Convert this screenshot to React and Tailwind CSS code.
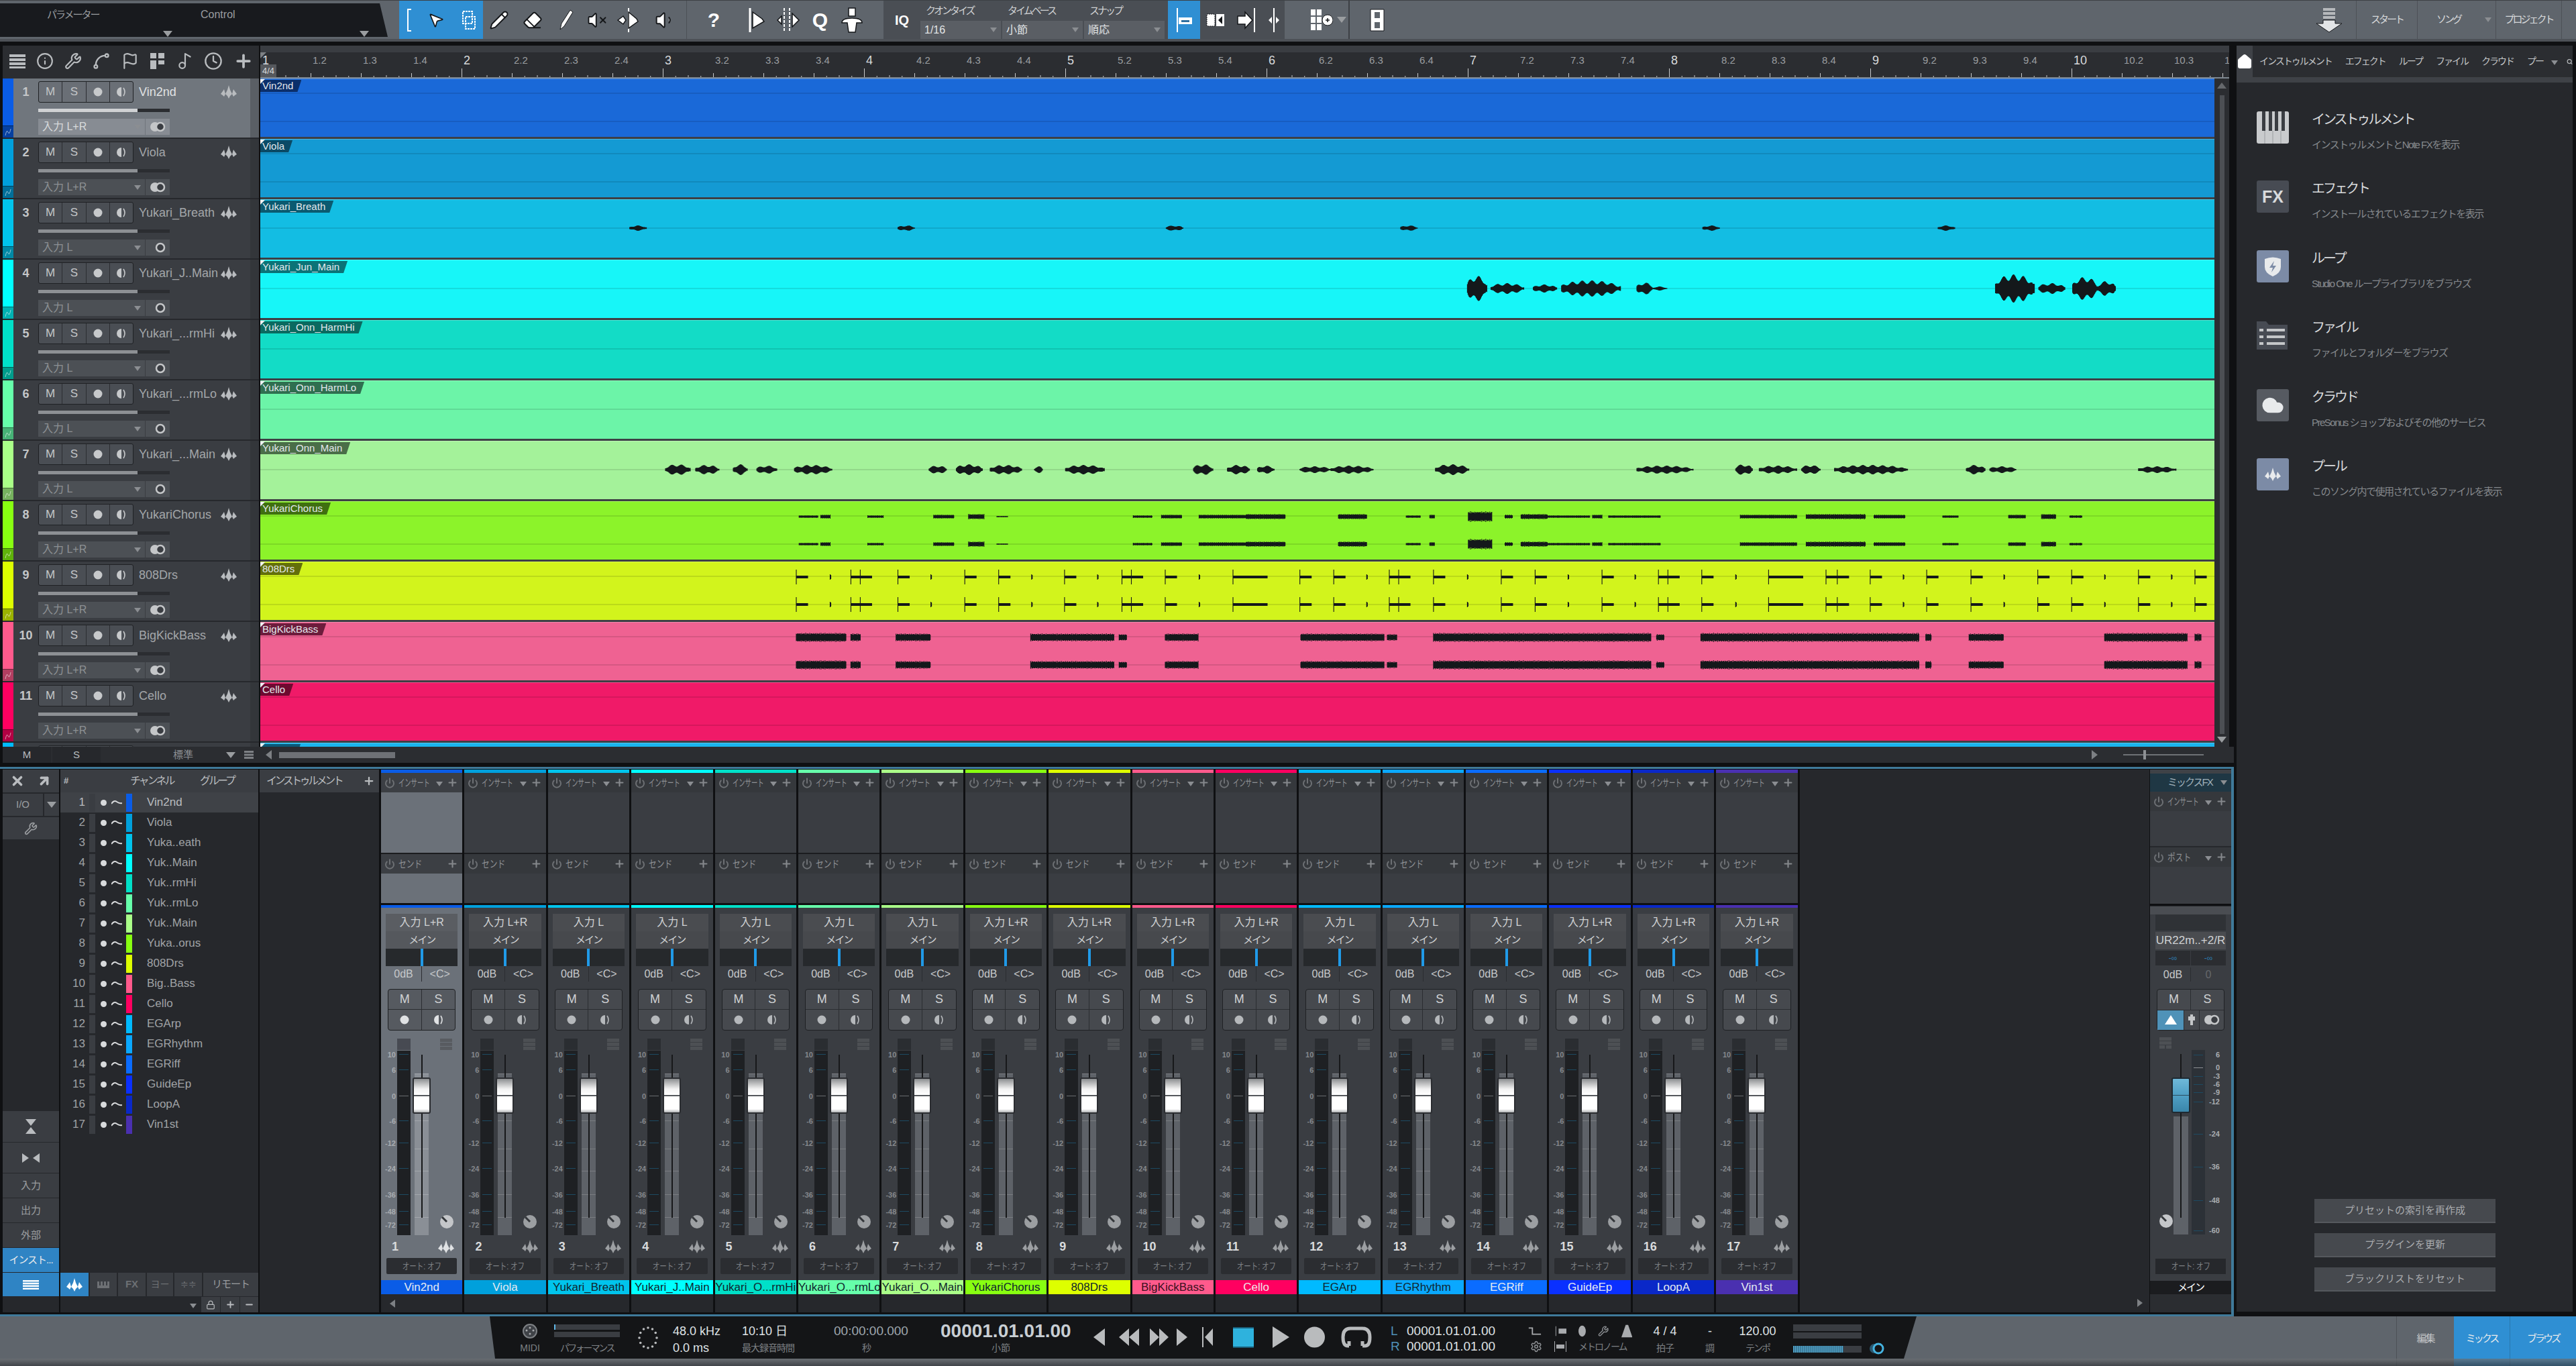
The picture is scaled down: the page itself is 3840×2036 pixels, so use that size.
import React from "react";
import { Wrench, Search, Power, Plus, Minus, X, Lock, Pencil, Eraser, Volume1, VolumeX, MousePointer2, Home, Cloud, Info, Spline, Flag, Clock, Music2, Settings, ArrowUpRight } from "lucide-react";

const tracks = [
  { name: "Vin2nd", clip: "Vin2nd", input: "入力 L+R", strip: "#0a5ce6", bg: "#1a69d8", tag: "#0b2f6b", stereo: true },
  { name: "Viola", clip: "Viola", input: "入力 L+R", strip: "#00a0dc", bg: "#149ad3", tag: "#0a4a66", stereo: true },
  { name: "Yukari_Breath", clip: "Yukari_Breath", input: "入力 L", strip: "#00c4ec", bg: "#13bde3", tag: "#0a5a70" },
  { name: "Yukari_J..Main", clip: "Yukari_Jun_Main", input: "入力 L", strip: "#00ffff", bg: "#17f6f8", tag: "#0b7377" },
  { name: "Yukari_...rmHi", clip: "Yukari_Onn_HarmHi", input: "入力 L", strip: "#00e0c8", bg: "#13dcc6", tag: "#0a6a60" },
  { name: "Yukari_...rmLo", clip: "Yukari_Onn_HarmLo", input: "入力 L", strip: "#66ffaa", bg: "#6cf4a8", tag: "#2f6f50" },
  { name: "Yukari_...Main", clip: "Yukari_Onn_Main", input: "入力 L", strip: "#aaff88", bg: "#a4f29a", tag: "#4a6e48" },
  { name: "YukariChorus", clip: "YukariChorus", input: "入力 L+R", strip: "#88ff11", bg: "#8cf32a", tag: "#3f6f10", stereo: true },
  { name: "808Drs", clip: "808Drs", input: "入力 L+R", strip: "#ddff00", bg: "#d2f41c", tag: "#636f0a", stereo: true },
  { name: "BigKickBass", clip: "BigKickBass", input: "入力 L+R", strip: "#ff5a8c", bg: "#ef6292", tag: "#6d1c3c", stereo: true },
  { name: "Cello", clip: "Cello", input: "入力 L+R", strip: "#ff0060", bg: "#f01a68", tag: "#6e0a30", stereo: true },
  { name: "EGArp", clip: "EGArp", input: "入力 L", strip: "#00baff", bg: "#1ab4ee", tag: "#0a5a78" },
];

const channels = [
  { short: "Vin2nd", name: "Vin2nd", input: "入力 L+R", color: "#0a5ce6", text: "text-[#e4eaf2]" },
  { short: "Viola", name: "Viola", input: "入力 L+R", color: "#00a0dc", text: "text-[#e4eaf2]" },
  { short: "Yuka..eath", name: "Yukari_Breath", input: "入力 L", color: "#00c4ec", text: "text-[#10262e]" },
  { short: "Yuk..Main", name: "Yukari_J..Main", input: "入力 L", color: "#00ffff", text: "text-[#10262e]" },
  { short: "Yuk..rmHi", name: "Yukari_O...rmHi", input: "入力 L", color: "#00e0c8", text: "text-[#10262e]" },
  { short: "Yuk..rmLo", name: "Yukari_O...rmLo", input: "入力 L", color: "#66ffaa", text: "text-[#10262e]" },
  { short: "Yuk..Main", name: "Yukari_O...Main", input: "入力 L", color: "#aaff88", text: "text-[#10262e]" },
  { short: "Yuka..orus", name: "YukariChorus", input: "入力 L+R", color: "#88ff11", text: "text-[#10262e]" },
  { short: "808Drs", name: "808Drs", input: "入力 L+R", color: "#ddff00", text: "text-[#10262e]" },
  { short: "Big..Bass", name: "BigKickBass", input: "入力 L+R", color: "#ff5a8c", text: "text-[#3a1020]" },
  { short: "Cello", name: "Cello", input: "入力 L+R", color: "#ff0060", text: "text-[#f0e4e8]" },
  { short: "EGArp", name: "EGArp", input: "入力 L", color: "#00baff", text: "text-[#10262e]" },
  { short: "EGRhythm", name: "EGRhythm", input: "入力 L", color: "#0aa8ff", text: "text-[#10262e]" },
  { short: "EGRiff", name: "EGRiff", input: "入力 L", color: "#0a6cff", text: "text-[#e4eaf2]" },
  { short: "GuideEp", name: "GuideEp", input: "入力 L+R", color: "#0a30ff", text: "text-[#e4eaf2]" },
  { short: "LoopA", name: "LoopA", input: "入力 L+R", color: "#0a28c8", text: "text-[#e4eaf2]" },
  { short: "Vin1st", name: "Vin1st", input: "入力 L+R", color: "#4a30b0", text: "text-[#e4eaf2]" },
];

// waveform blobs, [from, to, amp], x measured from the 1100px mark at 0.7127 scale
const vx = (v) => 1100 + v / 0.7127 - 388;

function wavePath(blobs, cy, flat) {
  let d = "";
  blobs.forEach(([a, b, amp]) => {
    const x1 = vx(a);
    const x2 = vx(b);
    for (let x = x1; x < x2; x += 1) {
      const t = (x - x1) / (x2 - x1);
      const env = flat ? 1 : Math.pow(Math.sin(Math.PI * Math.min(0.98, t + 0.03)), 0.4);
      const n = flat ? 0.8 + 0.2 * Math.sin(x * 3.7) * Math.sin(x * 12.9898) : 0.78 + 0.22 * Math.sin(x * 12.9898);
      const h = Math.max(0.6, amp * env * n);
      d += `M${x.toFixed(1)} ${(cy - h).toFixed(1)}V${(cy + h).toFixed(1)}`;
    }
  });
  return d;
}

const breath = [-115, 170, 455, 704, 1025, 1275].map((v) => [v, v + 18, 4]);
const jun = [[775, 796, 19], [800, 835, 8], [845, 870, 6], [875, 938, 12], [955, 972, 9], [972, 987, 3], [1336, 1378, 21], [1382, 1410, 8], [1418, 1445, 17], [1445, 1464, 11]];
const onnMain = [[-77, -50, 8], [-45, -20, 7], [-5, 10, 8], [20, 42, 6], [60, 100, 7], [203, 222, 6], [232, 260, 8], [268, 302, 7], [315, 324, 5], [348, 390, 7], [484, 505, 8], [520, 544, 7], [552, 570, 6], [597, 630, 5], [630, 675, 6], [741, 777, 8], [955, 1015, 6], [1060, 1078, 8], [1085, 1125, 6], [1130, 1150, 7], [1165, 1243, 7], [1305, 1325, 7], [1330, 1358, 5], [1488, 1528, 5]];
const chorus = [[65, 85, 2], [88, 98, 3], [138, 155, 2], [208, 230, 3], [245, 262, 4], [275, 287, 1], [420, 440, 2], [450, 472, 3], [490, 540, 3], [540, 582, 4], [638, 668, 4], [710, 725, 2], [735, 740, 3], [776, 801, 8], [815, 823, 3], [832, 860, 4], [860, 905, 2], [908, 918, 3], [925, 980, 2], [1065, 1125, 3], [1135, 1198, 4], [1207, 1240, 3], [1280, 1297, 2], [1350, 1368, 3], [1385, 1400, 4], [1415, 1428, 2]];
const hits = [62, 120, 130, 170, 241, 277, 347, 408, 418, 454, 526, 597, 633, 692, 702, 739, 811, 847, 918, 978, 988, 1024, 1095, 1156, 1168, 1203, 1263, 1310, 1381, 1417, 1488, 1548];
const ticks = [98, 205, 312, 382, 490, 668, 775, 882, 953, 1060, 1238, 1345, 1452, 1523];
const kick = [[62, 115, 7], [120, 130, 6], [168, 205, 6], [311, 400, 6], [405, 413, 5], [454, 489, 6], [598, 687, 6], [690, 700, 5], [739, 970, 7], [976, 984, 5], [1023, 1255, 7], [1262, 1268, 6], [1308, 1345, 6], [1452, 1540, 7], [1548, 1555, 6]];

function drumPath(cy) {
  let d = "";
  hits.forEach((v) => {
    const x = vx(v);
    const long = v === 526 || v === 1095;
    d += `M${x.toFixed(1)} ${cy - 11}V${cy + 11}`;
    const end = x + (long ? 52 : 18);
    for (let p = x + 1; p < end; p += 1) d += `M${p.toFixed(1)} ${cy - 2}V${cy + 2}`;
  });
  ticks.forEach((v) => {
    const x = vx(v);
    d += `M${x.toFixed(1)} ${cy - 4}V${cy + 4}M${(x + 1).toFixed(1)} ${cy - 3}V${cy + 3}`;
  });
  return d;
}

const laneWaves = {
  2: [wavePath(breath, 42)],
  3: [wavePath(jun, 42)],
  6: [wavePath(onnMain, 42)],
  7: [wavePath(chorus, 22, true), wavePath(chorus, 63, true)],
  8: [drumPath(22), drumPath(63)],
  9: [wavePath(kick, 22, true), wavePath(kick, 63, true)],
};

function Tri({ size = "md", up = false }) {
  if (size === "sm") return <span className="inline-block w-0 h-0 border-x-[5px] border-x-transparent border-t-[7px] border-t-[#8b8e92]" />;
  if (up) return <span className="inline-block w-0 h-0 border-x-[7px] border-x-transparent border-b-[9px] border-b-[#65686c]" />;
  return <span className="inline-block w-0 h-0 border-x-[7px] border-x-transparent border-t-[9px] border-t-[#9a9da0]" />;
}

function WaveIcon({ color = "#b9bcbf", className = "" }) {
  return (
    <svg width="24" height="20" viewBox="0 0 24 20" className={className} fill={color}>
      <path d="M0 13 3 9 5 6 7 13 5 17 3 15ZM7 13 10 7 12 0 14 7 17 13 14 16 12 20 10 16ZM17 13 19 6 21 9 24 13 21 15 19 17Z" />
    </svg>
  );
}

function Rec({ color = "#c7c9cb" }) {
  return (
    <svg width="14" height="14" viewBox="0 0 14 14"><circle cx="7" cy="7" r="6.5" fill={color} /></svg>
  );
}

function Mon({ color = "#c7c9cb" }) {
  return (
    <svg width="14" height="16" viewBox="0 0 14 16" fill={color}>
      <path d="M7 1A7 7 0 0 0 7 15Z" />
      <path d="M10 2Q14 8 10 14" fill="none" stroke={color} strokeWidth="1.6" />
    </svg>
  );
}

function Link({ stereo }) {
  return (
    <svg width="24" height="16" viewBox="0 0 24 16">
      {stereo && <circle cx="8" cy="8" r="7" fill="#c4c6c8" />}
      <circle cx="16" cy="8" r="6" fill="#3a3d42" stroke="#c4c6c8" strokeWidth="2.5" />
    </svg>
  );
}

function Knob({ color }) {
  return (
    <svg width="20" height="20" viewBox="0 0 20 20">
      <circle cx="10" cy="10" r="10" fill={color} />
      <path d="M3 3 10 10" stroke="#33363a" strokeWidth="3" />
    </svg>
  );
}

function ToolBtn({ w, children, className = "" }) {
  return <div className={`flex items-center justify-center shrink-0 h-full ${className}`} style={{ width: w }}>{children}</div>;
}

const tip = { fill: "#ffffff", stroke: "#15171a", strokeWidth: 1.5 };

function Toolbar() {
  return (
    <div className="flex h-[62px] shrink-0 bg-[#5f656c] border-t border-t-[#3d4045] border-b-4 border-b-[#4d5157] text-[#d7d9db]">
      <div className="w-[578px] h-[50px] mt-[4px] shrink-0 bg-[#181a1e] [clip-path:polygon(0_0,566px_0,100%_100%,0_100%)] flex">
        <div className="w-[265px] flex flex-col">
          <span className="text-[15px] tracking-[-2px] text-[#9a9da0] ml-[70px] mt-[7px] leading-[20px]">パラメーター</span>
          <span className="self-end mr-[8px] mt-[6px]"><Tri /></span>
        </div>
        <div className="w-[300px] flex flex-col">
          <span className="text-[16px] text-[#9a9da0] ml-[34px] mt-[7px] leading-[20px]">Control</span>
          <span className="self-end mr-[15px] mt-[6px]"><Tri /></span>
        </div>
      </div>
      <div className="w-[17px] shrink-0" />
      <div className="flex w-[125px] shrink-0 bg-[#2f8fd3]">
        <ToolBtn w={30}><svg width="10" height="36" viewBox="0 0 10 36"><path d="M8 2H3V34H8" fill="none" stroke="#fff" strokeWidth="2" /></svg></ToolBtn>
        <ToolBtn w={50}><MousePointer2 size={26} {...tip} /></ToolBtn>
        <ToolBtn w={45}><svg width="28" height="30" viewBox="0 0 28 30"><path d="M6 2H20V20H6ZM10 10H24V28H10Z" fill="#2f8fd3" stroke="#fff" strokeWidth="2" strokeDasharray="3 1" /></svg></ToolBtn>
      </div>
      <ToolBtn w={47}><Pencil size={30} {...tip} /></ToolBtn>
      <ToolBtn w={53}><Eraser size={30} {...tip} /></ToolBtn>
      <ToolBtn w={48}><svg width="24" height="34" viewBox="0 0 24 34"><path d="M3 31 5 22 18 2 22 5 9 26Z" fill="#fff" stroke="#15171a" /></svg></ToolBtn>
      <ToolBtn w={43}><VolumeX size={30} {...tip} /></ToolBtn>
      <ToolBtn w={49}><svg width="34" height="40" viewBox="0 0 34 40"><path d="M18 2V38" stroke="#fff" strokeWidth="2" /><path d="M2 20 10 14 14 20 10 26ZM18 8 30 18 32 22 18 32Z" {...tip} /></svg></ToolBtn>
      <ToolBtn w={63}><Volume1 size={32} {...tip} /></ToolBtn>
      <ToolBtn w={80} className="border-l border-l-[#4d5157] pl-[1px]"><span className="text-[30px] font-bold text-white">?</span></ToolBtn>
      <ToolBtn w={48}><svg width="30" height="40" viewBox="0 0 30 40"><path d="M6 2V38" stroke="#fff" strokeWidth="3" /><path d="M10 8 24 18 27 22 10 32Z" {...tip} /></svg></ToolBtn>
      <ToolBtn w={48}><svg width="36" height="40" viewBox="0 0 36 40"><path d="M12 2V38M20 2V38" stroke="#fff" strokeWidth="2" strokeDasharray="4 2" /><path d="M2 20 8 14V26ZM24 10 34 20 24 30Z" {...tip} /></svg></ToolBtn>
      <ToolBtn w={47}><span className="text-[30px] font-bold text-white">Q</span></ToolBtn>
      <ToolBtn w={48}><svg width="34" height="40" viewBox="0 0 34 40"><path d="M12 2H22V14H12ZM2 24Q2 17 17 17T32 24H24L22 38H12L10 24Z" {...tip} /></svg></ToolBtn>
      <div className="w-[23px] shrink-0" />
      <div className="flex w-[424px] shrink-0 bg-[#4a4e54]">
        <div className="w-[55px] flex items-center justify-center text-[20px] font-bold text-white">IQ</div>
        {[["クオンタイズ", "1/16"], ["タイムベース", "小節"], ["スナップ", "順応"]].map(([label, val]) => (
          <div key={label} className="w-[122px] flex flex-col">
            <span className="h-[30px] leading-[30px] pl-[8px] text-[15px] tracking-[-3px] text-[#cfd1d3]">{label}</span>
            <div className="h-[27px] w-[120px] bg-[#5a5e64] flex items-center justify-between px-[6px]">
              <span className="text-[16px] leading-[20px] text-[#e2e4e6]">{val}</span>
              <Tri size="sm" />
            </div>
          </div>
        ))}
      </div>
      <ToolBtn w={48} className="bg-[#2f8fd3]"><svg width="28" height="38" viewBox="0 0 28 38"><path d="M4 1V37" stroke="#fff" strokeWidth="2" /><path d="M6 15H26V25H6Z" fill="#fff" /><path d="M10 19H22V22H10Z" fill="#2f6f9f" /></svg></ToolBtn>
      <div className="flex w-[126px] shrink-0 bg-[#4a4e54]">
        <ToolBtn w={46}><svg width="28" height="20" viewBox="0 0 28 20"><path d="M1 1H13V19H1Z" fill="#fff" stroke="#15171a" strokeDasharray="2 1" /><path d="M15 1H27V19H15Z" fill="#fff" /><path d="M24 4V16L18 10Z" fill="#15171a" /></svg></ToolBtn>
        <ToolBtn w={48}><svg width="30" height="38" viewBox="0 0 30 38"><path d="M26 1V37" stroke="#fff" strokeWidth="2" /><path d="M1 13H12V7L23 19 12 31V25H1Z" {...tip} /></svg></ToolBtn>
        <ToolBtn w={32}><svg width="16" height="38" viewBox="0 0 16 38"><path d="M8 1V37" stroke="#fff" strokeWidth="2" /><path d="M5 14 0 19 5 24ZM11 14 16 19 11 24Z" fill="#fff" /></svg></ToolBtn>
      </div>
      <div className="flex w-[74px] shrink-0 h-full items-center justify-end pr-[2px]"><svg width="34" height="34" viewBox="0 0 34 34" fill="#fff"><path d="M1 1H8V10H1ZM10 1H17V10H10ZM1 12H8V21H1ZM10 12H17V21H10ZM1 23H8V32H1ZM10 23H17V32H10Z" /><circle cx="26" cy="17" r="8" stroke="#15171a" /><path d="M23 17H29M26 14V20" stroke="#15171a" strokeWidth="1.5" /></svg></div>
      <ToolBtn w={23} className="border-r-2 border-r-[#3d4045]"><Tri /></ToolBtn>
      <ToolBtn w={82}><svg width="24" height="36" viewBox="0 0 24 36"><path d="M2 2H22V34H2Z" fill="#fff" stroke="#15171a" /><path d="M8 6H16V15H8ZM8 21H16V30H8Z" fill="#5f656c" /></svg></ToolBtn>
      <div className="flex-1" />
      <ToolBtn w={50}><svg width="40" height="38" viewBox="0 0 40 38"><path d="M11 1H29V5H11ZM11 7H29V11H11ZM11 13H29V17H11Z" fill="#b5b8bb" /><path d="M11 19H29V24H39L20 37 1 24H11Z" fill="#e2e4e6" stroke="#15171a" /></svg></ToolBtn>
      <div className="w-[15px] shrink-0" />
      <ToolBtn w={91} className="border-l border-l-[#4d5157]"><span className="text-[15px] tracking-[-3px]">スタート</span></ToolBtn>
      <div className="flex w-[117px] shrink-0 h-full items-center border-l border-l-[#4d5157] pl-[28px]">
        <span className="w-[72px] text-[15px] tracking-[-3px]">ソング</span>
        <Tri size="sm" />
      </div>
      <ToolBtn w={98} className="border-l border-l-[#4d5157]"><span className="text-[15px] tracking-[-3px]">プロジェクト</span></ToolBtn>
      <div className="w-[22px] shrink-0 border-l border-l-[#4d5157]" />
    </div>
  );
}

function TrackRow({ t, i }) {
  const sel = i === 0;
  return (
    <div className="flex h-[90px] shrink-0 border-b-2 border-b-[#26282c]">
      <div className="w-[16px] shrink-0 flex flex-col" style={{ background: t.strip }}>
        <div className="flex-1" />
        <div className="h-[18px] bg-black/30 border-t border-t-black/40 flex items-center justify-center">
          <svg width="10" height="12" viewBox="0 0 10 12"><path d="M1 11Q3 1 5 6T9 1" fill="none" stroke="#ffffff" strokeOpacity="0.55" /></svg>
        </div>
      </div>
      <div className={`w-[353px] shrink-0 pl-[37px] pt-[4px] ${sel ? "bg-[#70767d]" : "bg-[#3a3d42]"}`}>
        <div className="flex h-[32px] items-center relative">
          <span className="absolute left-[-37px] w-[37px] text-center text-[18px] font-bold text-[#c4c6c8]">{i + 1}</span>
          <div className={`flex w-[142px] h-[32px] shrink-0 rounded-[3px] border border-[#1f2124] text-[#c4c6c8] ${sel ? "bg-[#6a6f76]" : "bg-[#4a4e54]"}`}>
            <span className="flex-1 flex items-center justify-center border-r border-r-[#2b2d31] text-[17px]">M</span>
            <span className="flex-1 flex items-center justify-center border-r border-r-[#2b2d31] text-[17px]">S</span>
            <span className="flex-1 flex items-center justify-center border-r border-r-[#2b2d31]"><Rec /></span>
            <span className="flex-1 flex items-center justify-center"><Mon /></span>
          </div>
          <span className={`ml-[8px] w-[118px] text-[18px] whitespace-nowrap overflow-hidden ${sel ? "text-[#e0e2e4]" : "text-[#a3a6a9]"}`}>{t.name}</span>
          <WaveIcon className="ml-[4px] shrink-0" />
        </div>
        <div className="flex h-[5px] w-[196px] mt-[9px] bg-[#2b2d31]">
          <div className={`w-[148px] ${sel ? "bg-[#d0d2d4]" : "bg-[#8d9094]"}`} />
        </div>
        <div className="flex h-[24px] w-[196px] mt-[10px]">
          <div className={`w-[159px] flex items-center justify-between px-[6px] text-[16px] ${sel ? "bg-[#878c93] text-[#d8dadc]" : "bg-[#4c5055] text-[#8d9094]"}`}>
            <span>{t.input}</span>
            <Tri size="sm" />
          </div>
          <div className={`flex-1 ml-[1px] flex items-center justify-center ${sel ? "bg-[#878c93]" : "bg-[#4c5055]"}`}><Link stereo={t.stereo} /></div>
        </div>
      </div>
      <div className={`w-[13px] shrink-0 ${sel ? "bg-[#5a5f65]" : "bg-[#33363a]"}`} />
    </div>
  );
}

function Lane({ t, i }) {
  const waves = laneWaves[i] || [];
  return (
    <div className="relative h-[90px] shrink-0 border-t border-t-white/25 border-b-[3px] border-b-[#3d4045]" style={{ background: t.bg }}>
      <svg className="absolute inset-0" width="2913" height="86" viewBox="0 0 2913 86">
        {t.stereo ? (
          <path d="M0 21H2913M0 63H2913" stroke="#000" strokeOpacity="0.14" strokeWidth="1.5" />
        ) : (
          <path d="M0 42H2913" stroke="#000" strokeOpacity="0.14" strokeWidth="1.5" />
        )}
        {waves.map((d, k) => <path key={k} d={d} stroke="#14181b" strokeWidth="1.1" fill="none" />)}
      </svg>
      <div className="absolute left-0 top-[1px] h-[18px] pl-[3px] pr-[12px] text-[15px] leading-[18px] text-[#e2e8ec] [clip-path:polygon(0_0,100%_0,calc(100%-6px)_100%,0_100%)]" style={{ background: t.tag }}>
        {t.clip}
      </div>
      <div className="absolute left-0 top-0 w-0 h-0 border-t-[7px] border-t-[#f0f2f4] border-r-[7px] border-r-transparent" />
    </div>
  );
}

function Ruler() {
  const beats = [];
  for (let b = 1; b <= 10; b++) {
    for (let s = 1; s <= 4; s++) beats.push({ key: `${b}.${s}`, label: s === 1 ? `${b}` : `${b}.${s}`, bar: s === 1 });
  }
  let d = "";
  for (let k = 0; k < 160; k++) {
    const x = k * 18.75 + 0.5;
    const h = k % 16 === 0 ? 13 : k % 4 === 0 ? 6 : k % 2 === 0 ? 3 : 2;
    d += `M${x} ${13 - h}V13`;
  }
  return (
    <div className="relative w-[2935px] h-[49px] shrink-0 overflow-hidden bg-[#2b2d31]">
      <div className="h-[10px] bg-[#3a3d42]" />
      <div className="flex h-[24px] items-center">
        {beats.map((b) => (
          <span key={b.key} className={`w-[75px] shrink-0 pl-[3px] leading-[24px] ${b.bar ? "text-[18px] text-[#d8dadc]" : "text-[15px] text-[#9a9da0]"}`}>{b.label}</span>
        ))}
      </div>
      <svg width="2935" height="13" viewBox="0 0 2935 13" className="block"><path d={d} stroke="#c8cacc" strokeWidth="1" /></svg>
      <div className="h-[2px] bg-[#7d8790]" />
      <div className="absolute left-0 top-[28px] h-[19px] w-[24px] bg-[#55585d] text-[13px] leading-[19px] text-center text-[#d8dadc]">4/4</div>
      <div className="absolute left-0 top-[10px] w-0 h-0 border-t-[9px] border-t-[#7d8084] border-r-[9px] border-r-transparent" />
    </div>
  );
}

function Arrange() {
  const icons = "text-[#b9bcbf] shrink-0";
  return (
    <div className="h-[1075px] shrink-0 pl-[4px] flex flex-col">
      <div className="flex h-[49px] shrink-0">
        <div className="w-[382px] shrink-0 bg-[#2b2d31] flex items-center justify-between pl-[10px] pr-[8px] pb-[4px]">
          <svg width="24" height="22" viewBox="0 0 24 22" fill="#b9bcbf"><path d="M0 1H24V5H0ZM0 7H24V11H0ZM0 13H24V17H0ZM0 19H24V22H0Z" /></svg>
          <Info size={26} className={icons} />
          <Wrench size={26} className={icons} />
          <Spline size={28} className={icons} />
          <Flag size={26} className={icons} />
          <svg width="24" height="26" viewBox="0 0 24 26" fill="#b9bcbf"><path d="M1 1H10V9H1ZM13 1H22V9H13ZM1 12H10V25H1ZM13 12H22V18H13Z" /></svg>
          <Music2 size={26} className={icons} />
          <Clock size={28} className={icons} />
          <Plus size={30} strokeWidth={3} className={icons} />
        </div>
        <div className="w-[2px] shrink-0" />
        <Ruler />
      </div>
      <div className="flex h-[996px] shrink-0 overflow-hidden">
        <div className="w-[382px] shrink-0 flex flex-col">
          {tracks.map((t, i) => <TrackRow key={i} t={t} i={i} />)}
        </div>
        <div className="w-[2px] shrink-0" />
        <div className="w-[2913px] shrink-0 flex flex-col">
          {tracks.map((t, i) => <Lane key={i} t={t} i={i} />)}
        </div>
        <div className="w-[22px] shrink-0 bg-[#2b2d31] flex flex-col items-center pt-[6px] pb-[6px]">
          <Tri size="md" up />
          <div className="w-[7px] flex-1 mt-[10px] mb-[4px] bg-[#4c4f54]" />
          <Tri />
        </div>
      </div>
      <div className="flex h-[24px] shrink-0 bg-[#2b2d31] items-center text-[#b9bcbf]">
        <span className="w-[72px] h-full flex items-center justify-center bg-[#26282c] text-[15px] leading-[18px]">M</span>
        <span className="w-[2px]" />
        <span className="w-[72px] h-full flex items-center justify-center bg-[#26282c] text-[15px] leading-[18px]">S</span>
        <span className="w-[72px]" />
        <span className="w-[102px] text-center text-[15px] leading-[20px] text-[#8d9094]">標準</span>
        <span className="w-[40px] flex justify-center"><Tri /></span>
        <svg width="14" height="12" viewBox="0 0 14 12" fill="#7d8084" className="mr-[18px]"><path d="M0 0H14V3H0ZM0 4.5H14V7.5H0ZM0 9H14V12H0Z" /></svg>
        <span className="w-0 h-0 border-y-[7px] border-y-transparent border-r-[9px] border-r-[#7d8084] mr-[11px]" />
        <div className="w-[173px] h-[9px] bg-[#6e7176]" />
        <div className="flex-1" />
        <span className="w-0 h-0 border-y-[7px] border-y-transparent border-l-[9px] border-l-[#7d8084] mr-[38px]" />
        <div className="w-[120px] h-[2px] bg-[#6e7176] relative mr-[45px]">
          <span className="absolute left-[30px] top-[-6px] w-[4px] h-[14px] bg-[#8d9094]" />
        </div>
      </div>
    </div>
  );
}

const dbMarks = [["10", 24], ["6", 47], ["0", 86], ["-6", 123], ["-12", 156], ["-24", 194], ["-36", 233], ["-48", 258], ["-72", 278]];
const trackMarks = [52, 122, 164, 197, 232, 266];

function SlotHead({ label, sel, arrow, wide }) {
  return (
    <div className={`h-[29px] shrink-0 flex items-center pl-[5px] pr-[6px] ${sel ? "bg-[#3c3f44]" : "bg-[#35383c]"}`}>
      <Power size={16} strokeWidth={3} className="text-[#6d7074] shrink-0" />
      <span className={`ml-[5px] text-[15px] leading-[20px] whitespace-nowrap inline-block w-[40px] origin-left text-[#8d9094] ${wide ? "scale-x-[0.62]" : "scale-x-[0.78]"}`}>{label}</span>
      <span className="flex-1" />
      {arrow && <span className="mr-[6px]"><Tri size="sm" /></span>}
      <Plus size={17} strokeWidth={3} className="text-[#85888c] shrink-0" />
    </div>
  );
}

function Channel({ c, i }) {
  const sel = i === 0;
  const body = sel ? "bg-[#6b7179]" : "bg-[#3a3d42]";
  return (
    <div className="w-[121.4px] shrink-0 flex flex-col h-full bg-[#26282c]">
      <div className="h-[5px]" style={{ background: c.color }} />
      <SlotHead label="インサート" sel={sel} arrow wide />
      <div className={`h-[90px] ${body}`} />
      <div className="h-[2px] bg-[#1b1c1f]" />
      <SlotHead label="センド" sel={sel} />
      <div className={`h-[44px] ${body}`} />
      <div className="h-[3px] bg-[#0f1012]" />
      <div className="h-[4px]" style={{ background: c.color }} />
      <div className={`h-[555px] shrink-0 pt-[9px] ${body}`}>
        <div className="mx-[7px] h-[101px] flex flex-col rounded-t-[2px] text-center">
          <div className={`h-[26px] leading-[26px] text-[16px] text-[#d0d2d4] ${sel ? "bg-[#5a5d62]" : "bg-[#4a4c50]"}`}>{c.input}</div>
          <div className={`h-[26px] leading-[26px] text-[15px] tracking-[-2px] text-[#d0d2d4] ${sel ? "bg-[#55585d]" : "bg-[#47494d]"}`}>メイン</div>
          <div className="h-[26px] bg-[#26292c] flex justify-center items-stretch"><span className="w-[4px] bg-[#209ae8]" /></div>
          <div className="h-[23px] flex text-[#c7c9cb] text-[16px] leading-[23px]">
            <span className="w-[54px] border-r border-r-[#2b2d31]">0dB</span>
            <span className="flex-1">&lt;C&gt;</span>
          </div>
        </div>
        <div className={`mx-[10px] mt-[11px] h-[62px] grid grid-cols-2 grid-rows-2 rounded-[4px] border border-[#1f2124] ${sel ? "bg-[#565a60]" : "bg-[#46494e]"} text-[#d0d2d4] text-[18px]`}>
          <span className="flex items-center justify-center border-r border-b border-[#2b2d31]">M</span>
          <span className="flex items-center justify-center border-b border-[#2b2d31]">S</span>
          <span className="flex items-center justify-center border-r border-[#2b2d31]"><Rec color={sel ? "#e0e2e4" : "#b5b8bb"} /></span>
          <span className="flex items-center justify-center"><Mon color={sel ? "#e0e2e4" : "#b5b8bb"} /></span>
        </div>
        <div className="flex h-[293px] mt-[12px]">
          <div className="relative w-[22px] shrink-0">
            {dbMarks.map(([l, y]) => (
              <span key={l} className={`absolute right-0 -translate-y-1/2 text-[11px] font-bold ${sel ? "text-[#a9acb0]" : "text-[#85888c]"}`} style={{ top: y }}>{l}</span>
            ))}
          </div>
          <div className="w-[2px] shrink-0" />
          <div className="relative w-[20px] shrink-0 flex flex-col">
            <div className={`h-[17px] ${sel ? "bg-[#474a52]" : "bg-[#2a2d31]"}`} />
            <div className="flex-1 mt-[1px] bg-[#1e2023]" />
            {dbMarks.map(([l, y]) => (
              <span key={l} className={`absolute left-[3px] w-[14px] h-[1px] ${l === "0" ? "bg-[#6a6d70]" : "bg-[#1d4a62]"}`} style={{ top: y - 1 }} />
            ))}
          </div>
          <div className="relative w-[21px] ml-[6px] shrink-0">
            <div className={`absolute left-0 right-0 top-[52px] bottom-0 ${sel ? "bg-[#8a8f96]" : "bg-[#5e6268]"}`} />
            {trackMarks.map((y) => <span key={y} className={`absolute left-0 right-0 h-[1px] ${sel ? "bg-[#a2a6ab]" : "bg-[#797c81]"}`} style={{ top: y }} />)}
            <div className="absolute left-[10px] w-[2px] top-[24px] h-[243px] bg-[#17181a]" />
            <div className="absolute left-[-3px] top-[58px] w-[27px] h-[54px] rounded-[3px] border-2 border-[#2b2d31] bg-[linear-gradient(#8d8f91_0%,#f2f2f2_30%,#ffffff_48%,#55585c_49%,#55585c_51%,#ffffff_52%,#ffffff_90%,#b0b2b4_100%)]" />
          </div>
          <div className="w-[17px] shrink-0" />
          <div className="w-[20px] shrink-0 flex flex-col justify-between">
            <svg width="18" height="17" viewBox="0 0 18 17" fill={sel ? "#585b60" : "#4d5054"}><path d="M0 0H18V5H0ZM0 6H18V11H0ZM0 12H18V17H0Z" /></svg>
            <div className="pb-[10px]"><Knob color={sel ? "#c4c6c9" : "#9c9fa2"} /></div>
          </div>
        </div>
        <div className="h-[34px] flex items-center pl-[16px] pr-[12px] justify-between">
          <span className="text-[18px] font-bold text-[#d8dadc]">{i + 1}</span>
          <WaveIcon color={sel ? "#e0e2e4" : "#9c9fa2"} />
        </div>
        <div className="mx-[8px] h-[24px] bg-[#2b2d31] rounded-[2px] flex items-center justify-center text-[14px] text-[#7d8084]">
          <span className="inline-block whitespace-nowrap scale-x-[0.75]">オート: オフ</span>
        </div>
      </div>
      <div className={`h-[21px] shrink-0 text-center text-[17px] leading-[21px] whitespace-nowrap overflow-hidden ${c.text}`} style={{ background: c.color }}>{c.name}</div>
      <div className="flex-1 flex items-center pl-[13px]">
        {i === 0 && <span className="w-0 h-0 border-y-[6px] border-y-transparent border-r-[8px] border-r-[#7d8084]" />}
      </div>
    </div>
  );
}

const mainMarks = [["6", 7], ["0", 26], ["-3", 39], ["-6", 51], ["-9", 63], ["-12", 77], ["-24", 125], ["-36", 174], ["-48", 224], ["-60", 269]];

function MainChannel() {
  return (
    <div className="w-[121px] shrink-0 flex flex-col h-full bg-[#3a3d42]">
      <div className="h-[6px] bg-[#3f4247]" />
      <div className="h-[27px] bg-[#1f3744] flex items-center justify-between pl-[26px] pr-[6px] text-[15px] text-[#9fb0ba]">
        <span className="tracking-[-2px] whitespace-nowrap">ミックスFX</span>
        <Tri size="sm" />
      </div>
      <SlotHead label="インサート" arrow wide />
      <div className="h-[54px] border-b-2 border-b-[#26282c]" />
      <SlotHead label="ポスト" arrow />
      <div className="h-[55px]" />
      <div className="h-[3px] bg-[#0f1012]" />
      <div className="h-[13px] bg-[#4a4d52] border-t border-t-[#26282c]" />
      <div className="mx-[8px] h-[24px] bg-[#2f3236]" />
      <div className="mx-[8px] mt-[2px] h-[26px] bg-[#4a4c50] text-center text-[17px] leading-[26px] text-[#d0d2d4] whitespace-nowrap">UR22m..+2/R</div>
      <div className="mx-[8px] mt-[2px] h-[22px] flex bg-[#2b2d31] text-center text-[12px] leading-[22px] text-[#2d79ad]">
        <span className="flex-1 border-r border-r-[#3a3d42]">-∞</span>
        <span className="flex-1">-∞</span>
      </div>
      <div className="mx-[8px] mt-[3px] h-[21px] flex text-center text-[16px] leading-[21px] text-[#c7c9cb]">
        <span className="flex-1 border-r border-r-[#2b2d31]">0dB</span>
        <span className="flex-1 text-[#65686c]">0</span>
      </div>
      <div className="mx-[10px] mt-[11px] h-[62px] rounded-[4px] border border-[#1f2124] flex flex-col text-[#d0d2d4] text-[18px] bg-[#46494e]">
        <div className="flex flex-1 border-b border-b-[#2b2d31]">
          <span className="flex-1 flex items-center justify-center border-r border-r-[#2b2d31]">M</span>
          <span className="flex-1 flex items-center justify-center">S</span>
        </div>
        <div className="flex flex-1">
          <span className="w-[39px] bg-[#4f92b8] flex items-center justify-center"><svg width="18" height="14" viewBox="0 0 18 14" fill="#fff"><path d="M9 0 18 14H0Z" /></svg></span>
          <span className="w-[24px] flex items-center justify-center border-x border-x-[#2b2d31]"><svg width="10" height="16" viewBox="0 0 10 16" fill="#c4c6c8"><path d="M3 0H7V3H10V9H7V16H3V9H0V3H3Z" /></svg></span>
          <span className="flex-1 flex items-center justify-center"><Link stereo /></span>
        </div>
      </div>
      <div className="flex h-[294px] mt-[10px] pl-[14px]">
        <div className="w-[18px] shrink-0 flex flex-col justify-between">
          <svg width="18" height="17" viewBox="0 0 18 17" fill="#4d5054"><path d="M0 0H18V5H0ZM0 6H18V11H0ZM0 12H8V17H0ZM10 12H18V17H10Z" /></svg>
          <div className="pb-[10px]"><Knob color="#c4c6c9" /></div>
        </div>
        <div className="relative w-[22px] ml-[3px] shrink-0 mt-[19px]">
          <div className="absolute left-0 right-0 top-[99px] bottom-0 bg-[#5e6268]" />
          <div className="absolute left-[10px] w-[2px] top-[6px] h-[244px] bg-[#17181a]" />
          <div className="absolute left-[-3px] top-[41px] w-[28px] h-[53px] rounded-[3px] border-2 border-[#1f2a32] bg-[linear-gradient(#6fb8d8_0%,#4f9fc4_48%,#2b4e60_49%,#2b4e60_51%,#4f9fc4_52%,#3a86aa_100%)]" />
        </div>
        <div className="relative w-[20px] ml-[5px] shrink-0 bg-[#2c3137] mt-[19px]">
          {mainMarks.map(([l, y]) => (
            <span key={l} className={`absolute left-[3px] w-[14px] h-[1px] ${l === "0" ? "bg-[#8d9094]" : "bg-[#1d4a62]"}`} style={{ top: y }} />
          ))}
        </div>
        <div className="relative w-[22px] shrink-0 mt-[19px]">
          {mainMarks.map(([l, y]) => (
            <span key={l} className="absolute right-0 -translate-y-1/2 text-[11px] font-bold text-[#a9acb0]" style={{ top: y }}>{l}</span>
          ))}
        </div>
      </div>
      <div className="mx-[8px] mt-[36px] h-[23px] bg-[#26282c] flex items-center justify-center text-[14px] text-[#7d8084]">
        <span className="inline-block whitespace-nowrap scale-x-[0.75]">オート: オフ</span>
      </div>
      <div className="mt-[10px] h-[20px] bg-[#1b1c1f] text-center text-[15px] leading-[20px] tracking-[-2px] text-white">メイン</div>
      <div className="flex-1 bg-[#2b2d31]" />
    </div>
  );
}

function LeftRail() {
  const btn = "flex items-center justify-center bg-[#3a3d42] text-[15px] text-[#9a9da0]";
  return (
    <div className="w-[84px] shrink-0 h-full flex flex-col gap-[1px] bg-[#26282c]">
      <div className="h-[34px] flex items-center justify-between px-[11px] bg-[#3a3d42]">
        <X size={22} strokeWidth={4} className="text-[#b9bcbf]" />
        <ArrowUpRight size={22} strokeWidth={4} className="text-[#b9bcbf]" />
      </div>
      <div className="h-[33px] flex gap-[2px] mt-[1px]">
        <span className={`w-[60px] ${btn}`}>I/O</span>
        <span className={`flex-1 ${btn}`}><Tri /></span>
      </div>
      <div className={`h-[33px] mt-[1px] ${btn}`}><Wrench size={20} /></div>
      <div className="flex-1" />
      <div className={`h-[46px] flex-col gap-[2px] ${btn}`}>
        <span className="w-0 h-0 border-x-[8px] border-x-transparent border-t-[10px] border-t-[#b9bcbf]" />
        <span className="w-0 h-0 border-x-[8px] border-x-transparent border-b-[10px] border-b-[#b9bcbf]" />
      </div>
      <div className={`h-[45px] gap-[6px] ${btn}`}>
        <span className="w-0 h-0 border-y-[7px] border-y-transparent border-l-[10px] border-l-[#b9bcbf]" />
        <span className="w-0 h-0 border-y-[7px] border-y-transparent border-r-[10px] border-r-[#b9bcbf]" />
      </div>
      <div className={`h-[36px] ${btn}`}>入力</div>
      <div className={`h-[36px] ${btn}`}>出力</div>
      <div className={`h-[36px] ${btn}`}>外部</div>
      <div className="h-[36px] flex items-center justify-center bg-[#2f84c4] text-[15px] text-[#e8eaec] tracking-[-1px]">インスト...</div>
      <div className="h-[35px] flex items-center justify-center bg-[#2f84c4]">
        <svg width="24" height="14" viewBox="0 0 24 14" fill="#fff"><path d="M0 0H24V2.5H0ZM0 3.8H24V6.3H0ZM0 7.6H24V10H0ZM0 11.4H24V14H0Z" /></svg>
      </div>
      <div className="h-[23px]" />
    </div>
  );
}

function ChannelList() {
  return (
    <div className="w-[295px] shrink-0 h-full flex flex-col bg-[#26282c]">
      <div className="h-[34px] shrink-0 bg-[#3a3d42] flex items-center text-[15px] text-[#b9bcbf]">
        <span className="w-[40px] pl-[5px] text-[13px] font-bold">#</span>
        <span className="ml-[64px] w-[104px] text-[16px] tracking-[-3px]">チャンネル</span>
        <span className="text-[16px] tracking-[-3px]">グループ</span>
      </div>
      {channels.map((c, i) => (
        <div key={i} className={`h-[30px] shrink-0 flex items-center ${i === 0 ? "bg-[#3f4247] text-[#b9bcbf]" : "text-[#a0a3a6]"}`}>
          <span className="w-[37px] text-right text-[17px]">{i + 1}</span>
          <span className="w-[9px] h-[27px] ml-[6px] bg-[#3a3d42]" />
          <span className="w-[9px] h-[9px] ml-[8px] rounded-full bg-[#d8dadc]" />
          <svg width="16" height="8" viewBox="0 0 16 8" className="ml-[7px]"><path d="M0 6Q4 0 8 3T16 5" fill="none" stroke="#d8dadc" strokeWidth="2" /></svg>
          <span className="w-[9px] h-[27px] ml-[6px]" style={{ background: c.color }} />
          <span className="ml-[22px] text-[17px]">{c.short}</span>
        </div>
      ))}
      <div className="flex-1" />
      <div className="h-[35px] shrink-0 flex gap-[2px] bg-[#26282c]">
        <span className="w-[42px] bg-[#2f84c4] flex items-center justify-center"><WaveIcon color="#fff" /></span>
        <span className="w-[40px] bg-[#3a3d42] flex items-center justify-center"><svg width="18" height="10" viewBox="0 0 18 10" fill="#6d7074"><path d="M0 0H3V6H5V0H8V6H10V0H13V6H15V0H18V10H0Z" /></svg></span>
        <span className="w-[41px] bg-[#3a3d42] flex items-center justify-center text-[15px] font-bold text-[#6d7074]">FX</span>
        <span className="w-[39px] bg-[#3a3d42] flex items-center justify-center text-[14px] text-[#6d7074]">ヨー</span>
        <span className="w-[41px] bg-[#3a3d42] flex items-center justify-center text-[14px] text-[#6d7074]">≑≑</span>
        <span className="flex-1 bg-[#3a3d42] flex items-center justify-center text-[15px] tracking-[-1px] text-[#9a9da0]">リモート</span>
      </div>
      <div className="h-[23px] mt-[1px] shrink-0 flex justify-end items-center">
        <span className="mr-[7px]"><Tri size="sm" /></span>
        <span className="w-[28px] h-full bg-[#3a3d42] flex items-center justify-center"><Lock size={14} className="text-[#b9bcbf]" /></span>
        <span className="w-[28px] h-full bg-[#3a3d42] ml-[1px] flex items-center justify-center"><Plus size={15} strokeWidth={3} className="text-[#b9bcbf]" /></span>
        <span className="w-[27px] h-full bg-[#3a3d42] ml-[1px] flex items-center justify-center"><Minus size={15} strokeWidth={3} className="text-[#b9bcbf]" /></span>
      </div>
    </div>
  );
}

function Mixer() {
  return (
    <div className="flex-1 border-t-[3px] border-b-[3px] border-r-[4px] border-[#3f7a9a] pt-[1px] pb-[3px] pl-[4px] flex min-h-0">
      <LeftRail />
      <div className="w-[2px] shrink-0" />
      <ChannelList />
      <div className="w-[2px] shrink-0" />
      <div className="w-[178px] shrink-0 h-full bg-[#26282c]">
        <div className="h-[34px] bg-[#3a3d42] flex items-center justify-between pl-[10px] pr-[6px] text-[16px] tracking-[-3.5px] text-[#b9bcbf]">
          <span>インストゥルメント</span>
          <Plus size={18} strokeWidth={3} />
        </div>
      </div>
      <div className="w-[3px] shrink-0" />
      <div className="flex gap-[3px] shrink-0 h-full">
        {channels.map((c, i) => <Channel key={i} c={c} i={i} />)}
      </div>
      <div className="flex-1 h-full ml-[3px] bg-[#26282c] flex items-end justify-end pb-[4px] pr-[10px]">
        <span className="w-0 h-0 border-y-[6px] border-y-transparent border-l-[8px] border-l-[#7d8084] mb-[4px]" />
      </div>
      <div className="w-[1px] shrink-0" />
      <MainChannel />
    </div>
  );
}

const browserItems = [
  ["インストゥルメント", "インストゥルメントとNote FXを表示", "piano"],
  ["エフェクト", "インストールされているエフェクトを表示", "fx"],
  ["ループ", "Studio One ループライブラリをブラウズ", "loop"],
  ["ファイル", "ファイルとフォルダーをブラウズ", "file"],
  ["クラウド", "PreSonus ショップおよびその他のサービス", "cloud"],
  ["プール", "このソング内で使用されているファイルを表示", "pool"],
];

function BrowserIcon({ kind }) {
  if (kind === "piano") {
    return (
      <svg width="48" height="48" viewBox="0 0 48 48">
        <rect width="48" height="48" rx="3" fill="#c9cbcd" />
        <path d="M8 0H13V29H8ZM18 0H23V29H18ZM27 0H32V29H27ZM37 0H42V29H37Z" fill="#3a3d42" />
        <path d="M12 29V48M24 29V48M36 29V48" stroke="#9a9da0" />
      </svg>
    );
  }
  if (kind === "fx") {
    return <div className="w-[48px] h-[48px] rounded-[3px] bg-[#474b53] flex items-center justify-center text-[25px] font-bold text-[#d8dadc]">FX</div>;
  }
  if (kind === "loop") {
    return (
      <div className="w-[48px] h-[48px] rounded-[3px] bg-[#7c8ba6] flex items-center justify-center">
        <svg width="26" height="30" viewBox="0 0 26 30"><path d="M1 4Q13 -1 25 4V16Q25 25 13 30 1 25 1 16Z" fill="#e8eaec" /><path d="M15 7 8 17H13L11 24 18 14H13Z" fill="#7c8ba6" /></svg>
      </div>
    );
  }
  if (kind === "file") {
    return (
      <svg width="48" height="48" viewBox="0 0 48 48" fill="#c4c6c8">
        <path d="M0 3H14L18 8H46V45H0Z" fill="#474b53" />
        <path d="M4 14H10V18H4ZM4 24H10V28H4ZM4 34H10V38H4ZM15 14H42V18H15ZM15 24H42V28H15ZM15 34H42V38H15Z" />
      </svg>
    );
  }
  if (kind === "cloud") {
    return <div className="w-[48px] h-[48px] rounded-[3px] bg-[#565a61] flex items-center justify-center"><Cloud size={34} fill="#e8eaec" className="text-[#e8eaec]" /></div>;
  }
  return <div className="w-[48px] h-[48px] rounded-[3px] bg-[#7c8ba6] flex items-center justify-center"><WaveIcon color="#e8eaec" /></div>;
}

function Browser() {
  return (
    <div className="w-[501px] shrink-0 h-[1887px] ml-[4px] flex flex-col bg-[#26282c]">
      <div className="h-[47px] shrink-0 flex items-center bg-[#2b2d31] text-[#c4c6c8]">
        <div className="w-[36px] h-full bg-[#3f4247] flex items-center justify-center"><Home size={24} fill="#fff" className="text-white" /></div>
        <div className="flex items-center text-[14px] tracking-[-2px] whitespace-nowrap ml-[10px] gap-[20px]">
          <span>インストゥルメント</span>
          <span>エフェクト</span>
          <span>ループ</span>
          <span>ファイル</span>
          <span>クラウド</span>
          <span>プー</span>
        </div>
        <span className="ml-[12px]"><Tri size="sm" /></span>
        <Search size={22} strokeWidth={3} className="ml-[13px] text-[#b9bcbf]" />
      </div>
      <div className="h-[8px] shrink-0 bg-[#3f4247]" />
      <div className="pt-[43px] pl-[30px] flex flex-col">
        {browserItems.map(([title, sub, kind]) => (
          <div key={kind} className="h-[103.4px] flex gap-[34px]">
            <div className="w-[48px] h-[48px] shrink-0"><BrowserIcon kind={kind} /></div>
            <div className="flex flex-col whitespace-nowrap">
              <span className="h-[24px] leading-[24px] text-[20px] tracking-[-3px] text-[#d8dadc]">{title}</span>
              <span className="h-[18px] leading-[18px] mt-[17px] text-[15px] tracking-[-1.5px] text-[#85888c]">{sub}</span>
            </div>
          </div>
        ))}
      </div>
      <div className="mt-auto mb-[30px] ml-[116px] w-[270px] flex flex-col gap-[15px] text-[15px] text-[#a9abae]">
        <div className="h-[36px] flex items-center justify-center bg-[#46494e] border-b-2 border-b-[#55585d]">プリセットの索引を再作成</div>
        <div className="h-[36px] flex items-center justify-center bg-[#46494e] border-b-2 border-b-[#55585d]">プラグインを更新</div>
        <div className="h-[36px] flex items-center justify-center bg-[#46494e] border-b-2 border-b-[#55585d]">ブラックリストをリセット</div>
      </div>
    </div>
  );
}

function Stat({ w, value, label, className = "", labelClass = "" }) {
  return (
    <div className={`shrink-0 flex flex-col ${className}`} style={{ width: w }}>
      <span className="h-[22px] leading-[22px] text-[18px] text-[#dfe2e5] whitespace-nowrap">{value}</span>
      <span className={`h-[16px] mt-[6px] leading-[16px] text-[14px] whitespace-nowrap ${labelClass || "text-[#7d8084]"}`}>{label}</span>
    </div>
  );
}

const gray = "#b9bbbd";

function TransportBtns() {
  return (
    <div className="flex items-center h-[40px]">
      <svg width="18" height="26" viewBox="0 0 18 26" fill={gray}><path d="M17 0V26L0 13Z" /></svg>
      <svg width="30" height="26" viewBox="0 0 30 26" fill={gray} className="ml-[20px]"><path d="M15 0V26L0 13ZM30 0V26L15 13Z" /></svg>
      <svg width="28" height="26" viewBox="0 0 28 26" fill={gray} className="ml-[16px]"><path d="M0 0V26L14 13ZM14 0V26L28 13Z" /></svg>
      <svg width="16" height="26" viewBox="0 0 16 26" fill={gray} className="ml-[12px]"><path d="M0 0V26L16 13Z" /></svg>
      <svg width="16" height="30" viewBox="0 0 16 30" fill={gray} className="ml-[22px]"><path d="M0 0H2V30H0ZM16 2V28L4 15Z" /></svg>
      <div className="w-[31px] h-[31px] ml-[30px] bg-[#2eb2dd] border-y-2 border-y-[#1a5e78]" />
      <svg width="25" height="32" viewBox="0 0 25 32" fill={gray} className="ml-[28px]"><path d="M0 0V32L25 16Z" /></svg>
      <svg width="31" height="32" viewBox="0 0 31 32" className="ml-[22px]"><circle cx="15.5" cy="16" r="15.5" fill={gray} /></svg>
      <svg width="46" height="32" viewBox="0 0 46 32" className="ml-[24px]"><path d="M12 29H10Q3 29 3 16T14 3H32Q43 3 43 16T36 29H32M12 29V22M32 29V22" fill="none" stroke={gray} strokeWidth="5" /></svg>
    </div>
  );
}

function Transport() {
  return (
    <div className="relative h-[74px] shrink-0 flex bg-[#5f656c]">
      <div className="w-[730px] shrink-0" />
      <div className="w-[2127px] h-[63px] shrink-0 bg-[#141517] [clip-path:polygon(0_0,100%_0,calc(100%-19px)_100%,8px_100%)] flex pt-[11px] text-[#dfe2e5]">
        <div className="w-[38px] shrink-0" />
        <div className="w-[44px] shrink-0 flex flex-col items-center">
          <svg width="28" height="24" viewBox="0 0 28 24"><circle cx="14" cy="11" r="10" fill="#3f4247" stroke="#7d8084" strokeWidth="2" /><circle cx="9" cy="10" r="1.5" fill="#a9abae" /><circle cx="14" cy="6" r="1.5" fill="#a9abae" /><circle cx="19" cy="10" r="1.5" fill="#a9abae" /><circle cx="14" cy="15" r="1.5" fill="#a9abae" /></svg>
          <span className="mt-[4px] h-[16px] leading-[16px] text-[14px] text-[#7d8084]">MIDI</span>
        </div>
        <div className="w-[98px] ml-[14px] shrink-0 flex flex-col items-stretch">
          <div className="h-[8px] mt-[1px] bg-[#3a3d42] border-l-2 border-l-[#5fb6e6]" />
          <div className="h-[8px] mt-[3px] bg-[#3a3d42]" />
          <span className="mt-[8px] h-[16px] leading-[16px] text-[14px] tracking-[-2.5px] text-[#7d8084] text-center">パフォーマンス</span>
        </div>
        <svg width="30" height="34" viewBox="0 0 30 34" fill="#b9bbbd" className="ml-[27px] mt-[4px] shrink-0">
          {[0, 1, 2, 3, 4, 5, 6, 7, 8, 9, 10, 11].map((k) => (
            <circle key={k} cx={15 + 13 * Math.cos((k * Math.PI) / 6)} cy={17 + 15 * Math.sin((k * Math.PI) / 6)} r="1.8" />
          ))}
        </svg>
        <Stat w={103} value="48.0 kHz" label="0.0 ms" className="ml-[22px]" labelClass="text-[18px] text-[#dfe2e5]" />
        <Stat w={137} value="10:10 日" label="最大録音時間" labelClass="tracking-[-1px] text-[#7d8084]" />
        <Stat w={159} value={<span className="text-[#9fa7ae] text-[19px]">00:00:00.000</span>} label={<span className="ml-[42px]">秒</span>} />
        <div className="w-[228px] shrink-0 flex flex-col">
          <span className="h-[22px] leading-[22px] text-[28px] font-bold text-[#c8ced3]">00001.01.01.00</span>
          <span className="h-[16px] mt-[6px] leading-[16px] text-[14px] text-[#7d8084] ml-[76px]">小節</span>
        </div>
        <TransportBtns />
        <div className="w-[28px] shrink-0" />
        <div className="w-[190px] shrink-0 flex flex-col">
          <div className="flex h-[22px] leading-[22px] text-[19px]"><span className="w-[24px] text-[#4f92b8]">L</span>00001.01.01.00</div>
          <div className="flex h-[22px] leading-[22px] text-[19px] mt-[1px]"><span className="w-[24px] text-[#4f92b8]">R</span>00001.01.01.00</div>
        </div>
        <div className="w-[170px] shrink-0 flex flex-col text-[#8d9094]">
          <div className="flex items-center h-[22px] gap-[18px] pl-[14px]">
            <svg width="24" height="14" viewBox="0 0 24 14"><path d="M2 2H8V12H22" fill="none" stroke="#a9abae" strokeWidth="2" /></svg>
            <svg width="20" height="16" viewBox="0 0 20 16" fill="#a9abae"><path d="M2 0H3V16H2ZM7 4H20V12H7Z" /></svg>
            <svg width="12" height="18" viewBox="0 0 12 18"><ellipse cx="6" cy="9" rx="6" ry="9" fill="#a9abae" /></svg>
            <Wrench size={18} />
            <svg width="18" height="20" viewBox="0 0 18 20" fill="#a9abae"><path d="M7 0H11L18 20H0Z" /></svg>
          </div>
          <div className="flex items-center h-[22px] mt-[1px] pl-[18px]">
            <Settings size={18} />
            <svg width="22" height="16" viewBox="0 0 22 16" fill="#a9abae" className="ml-[16px]"><path d="M2 0H3V16H2ZM19 0H20V16H19ZM5 5H17V11H5Z" /></svg>
            <span className="ml-[16px] text-[14px] tracking-[-2px] whitespace-nowrap text-[#7d8084]">メトロノーム</span>
          </div>
        </div>
        <div className="w-[60px] shrink-0 ml-[19px] flex flex-col items-center">
          <span className="h-[22px] leading-[22px] text-[18px] text-[#dfe2e5] whitespace-nowrap">4 / 4</span>
          <span className="h-[16px] mt-[6px] leading-[16px] text-[14px] tracking-[-1px] text-[#7d8084]">拍子</span>
        </div>
        <div className="w-[66px] shrink-0 ml-[4px] flex flex-col items-center">
          <span className="h-[22px] leading-[22px] text-[18px]">-</span>
          <span className="h-[16px] mt-[6px] leading-[16px] text-[14px] text-[#7d8084]">調</span>
        </div>
        <div className="w-[70px] shrink-0 ml-[3px] flex flex-col items-center">
          <span className="h-[22px] leading-[22px] text-[18px]">120.00</span>
          <span className="h-[16px] mt-[6px] leading-[16px] text-[14px] tracking-[-2px] text-[#7d8084]">テンポ</span>
        </div>
        <div className="w-[102px] ml-[18px] shrink-0 flex flex-col">
          <div className="h-[10px] mt-[1px] bg-[#3a3d42]" />
          <div className="h-[9px] mt-[2px] bg-[#3a3d42]" />
          <div className="h-[10px] mt-[11px] flex bg-[#3a3d42]"><div className="w-[75px] bg-[repeating-linear-gradient(90deg,#4f9fc4_0,#4f9fc4_2px,#2b5870_2px,#2b5870_3px)]" /></div>
        </div>
        <svg width="22" height="18" viewBox="0 0 22 18" className="ml-[12px] mt-[28px] shrink-0"><circle cx="7" cy="9" r="7" fill="#2b5870" /><circle cx="13" cy="9" r="7" fill="#141517" stroke="#45b3e0" strokeWidth="3" /></svg>
      </div>
      <div className="w-[715px] shrink-0" />
      <div className="flex w-[268px] shrink-0 h-full">
        <div className="w-[86px] h-full border-l border-l-[#4d5157] flex items-center justify-center text-[15px] tracking-[-2px] text-[#c4c6c8] pb-[8px]">編集</div>
        <div className="w-[83px] h-full bg-[#2f8fd3] flex items-center justify-center text-[15px] tracking-[-3px] text-[#e8eaec] pb-[8px]">ミックス</div>
        <div className="flex-1 h-full bg-[#2f8fd3] border-l border-l-[#2a78ae] flex items-center justify-center text-[15px] tracking-[-3px] text-[#e8eaec] pb-[8px]">ブラウズ</div>
      </div>
      <div className="absolute left-0 right-0 bottom-0 h-[11px] bg-[linear-gradient(#6d7175,#33363a)] opacity-70" />
    </div>
  );
}

export default function App() {
  return (
    <div className="w-[3840px] h-[2036px] overflow-hidden bg-[#0f1012] flex flex-col font-['Liberation_Sans','Noto_Sans_CJK_JP',sans-serif]">
      <Toolbar />
      <div className="h-[6px] shrink-0" />
      <div className="flex h-[1894px] shrink-0">
        <div className="w-[3330px] shrink-0 flex flex-col">
          <Arrange />
          <Mixer />
        </div>
        <Browser />
      </div>
      <Transport />
    </div>
  );
}
